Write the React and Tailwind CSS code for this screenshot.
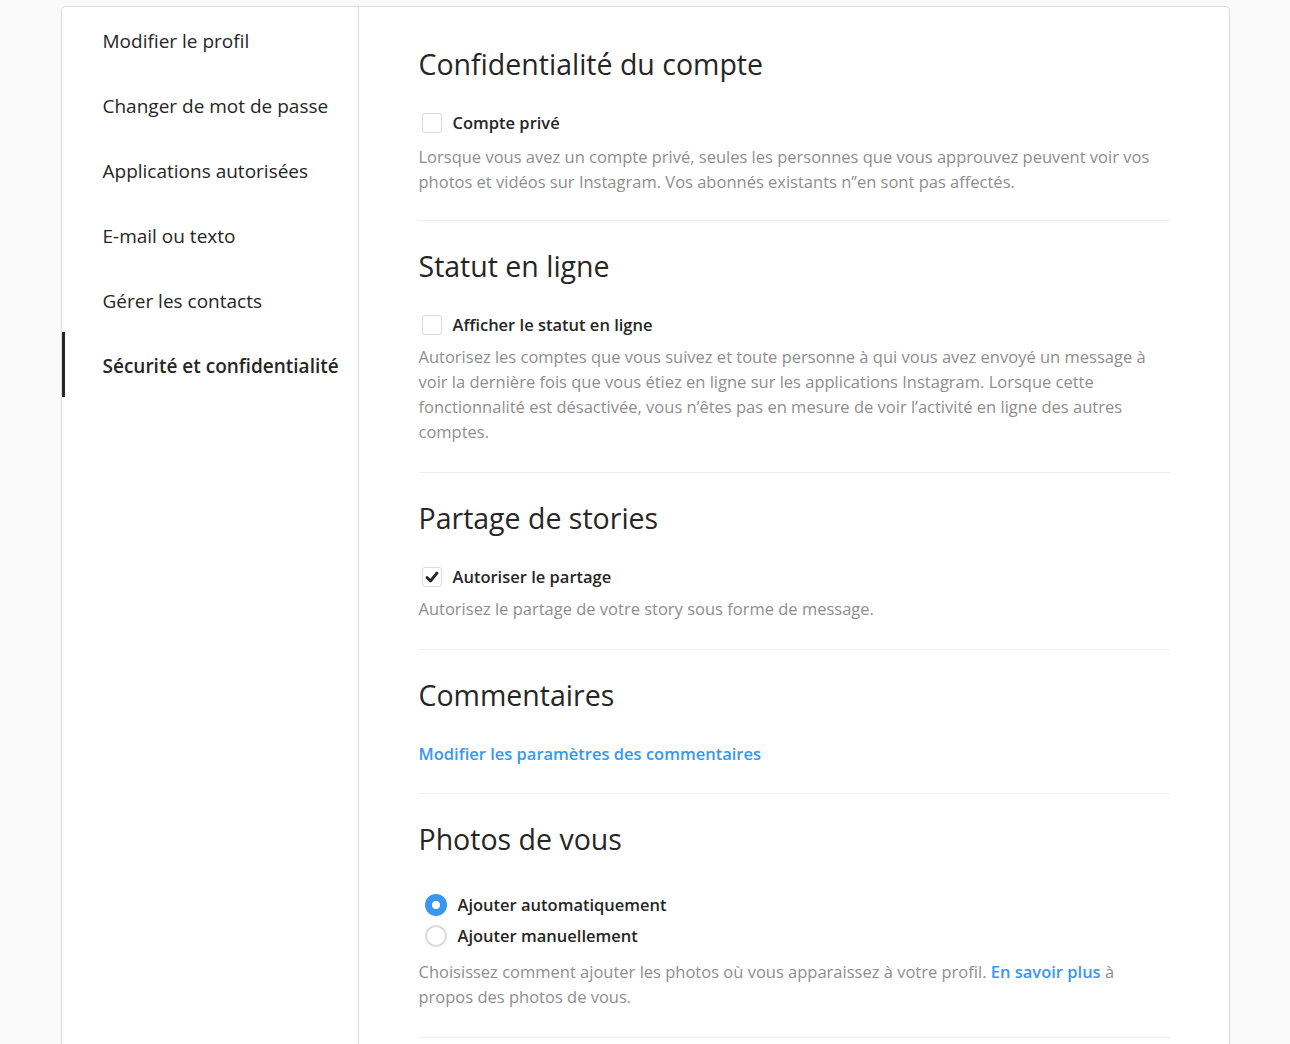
const navItems = [
  'Modifier le profil',
  'Changer de mot de passe',
  'Applications autorisées',
  'E-mail ou texto',
  'Gérer les contacts',
  'Sécurité et confidentialité',
];

const Checkbox = ({ checked }) => (
  <span className="ml-[3px] w-[20px] h-[20px] rounded-[3px] border border-[#dbdbdb] bg-white flex items-center justify-center shrink-0">
    {checked && (
      <svg width="14" height="14" viewBox="0 0 14 14">
        <path d="M2 7.5 L5.5 11 L12 3" fill="none" stroke="#262626" strokeWidth="2.8" strokeLinecap="round" strokeLinejoin="round" />
      </svg>
    )}
  </span>
);

const CheckRow = ({ label, checked }) => (
  <label className="flex items-center gap-[11px] h-[24px]">
    <Checkbox checked={checked} />
    <span className="text-[16.5px] font-semibold text-[#262626]">{label}</span>
  </label>
);

const Radio = ({ label, checked }) => (
  <label className="flex items-center gap-[11px] h-[24px] pl-[6px]">
    {checked ? (
      <span className="w-[22px] h-[22px] rounded-full border-[7px] border-[#3897f0] bg-white shrink-0" />
    ) : (
      <span className="w-[22px] h-[22px] rounded-full border-2 border-[#dbdbdb] bg-white shrink-0" />
    )}
    <span className="text-[16.5px] font-semibold text-[#262626]">{label}</span>
  </label>
);

const Desc = ({ children, className = '' }) => (
  <p className={`text-[16.5px] leading-[25px] text-[#8e8e8e] ${className}`}>{children}</p>
);

const Section = ({ title, children, className = 'pb-[28px]', last }) => (
  <section className={`pt-[27px] ${className} ${last ? '' : 'border-b border-[#efefef]'}`}>
    <h2 className="text-[28.5px] leading-[36px] font-normal text-[#262626]">{title}</h2>
    {children}
  </section>
);

export default function App() {
  return (
    <div className="min-h-[1044px] bg-[#fafafa] pt-[6px]" style={{ fontFamily: '"Open Sans", "Noto Sans", sans-serif' }}>
      <div className="w-[1169px] mx-auto bg-white border border-[#dbdbdb] rounded-t-[4px] flex min-h-[1040px]">
        {/* sidebar */}
        <ul className="w-[297px] shrink-0 border-r border-[#dbdbdb]">
          {navItems.map((item, i) => {
            const active = i === navItems.length - 1;
            return (
              <li
                key={item}
                className={`h-[65px] flex items-center pl-[38px] pt-[4px] border-l-[3px] text-[19px] text-[#262626] ${
                  active ? 'border-[#262626] font-semibold' : 'border-transparent'
                }`}
              >
                {item}
              </li>
            );
          })}
        </ul>

        {/* main */}
        <div className="flex-1 pl-[60px] pr-[59px] pt-[12px]">
          <Section title="Confidentialité du compte" className="pb-[26px]">
            <div className="mt-[29px]">
              <CheckRow label="Compte privé" />
            </div>
            <Desc className="mt-[9px]">
              Lorsque vous avez un compte privé, seules les personnes que vous approuvez peuvent voir vos photos et vidéos sur
              Instagram. Vos abonnés existants n’’en sont pas affectés.
            </Desc>
          </Section>

          <Section title="Statut en ligne">
            <div className="mt-[29px]">
              <CheckRow label="Afficher le statut en ligne" />
            </div>
            <Desc className="mt-[7px]">
              Autorisez les comptes que vous suivez et toute personne à qui vous avez envoyé un message à voir la dernière fois
              que vous étiez en ligne sur les applications Instagram. Lorsque cette fonctionnalité est désactivée, vous n’êtes pas
              en mesure de voir l’activité en ligne des autres comptes.
            </Desc>
          </Section>

          <Section title="Partage de stories">
            <div className="mt-[29px]">
              <CheckRow label="Autoriser le partage" checked />
            </div>
            <Desc className="mt-[7px]">Autorisez le partage de votre story sous forme de message.</Desc>
          </Section>

          <Section title="Commentaires" className="pb-[27px]">
            <a href="#" className="block mt-[29px] text-[16.5px] leading-[24px] font-semibold text-[#3897f0]">
              Modifier les paramètres des commentaires
            </a>
          </Section>

          <Section title="Photos de vous">
            <div className="mt-[36px] flex flex-col gap-[7px]">
              <Radio label="Ajouter automatiquement" checked />
              <Radio label="Ajouter manuellement" />
            </div>
            <Desc className="mt-[11px]">
              Choisissez comment ajouter les photos où vous apparaissez à votre profil.{' '}
              <a href="#" className="font-semibold text-[#3897f0]">
                En savoir plus
              </a>{' '}
              à propos des photos de vous.
            </Desc>
          </Section>
        </div>
      </div>
    </div>
  );
}
